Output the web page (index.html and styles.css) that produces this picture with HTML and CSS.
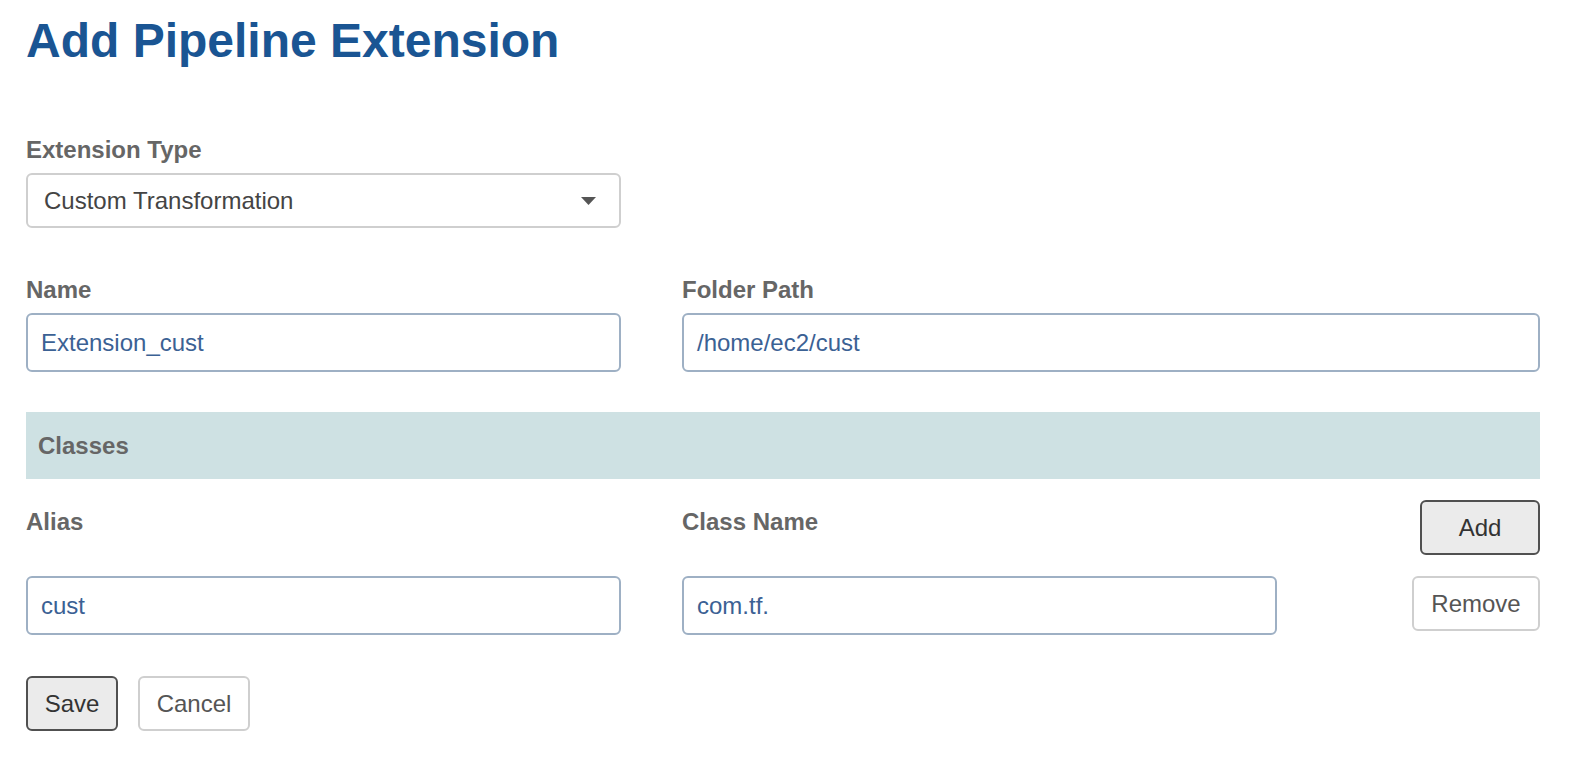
FILE: index.html
```html
<!DOCTYPE html>
<html lang="en">
<head>
<meta charset="utf-8">
<title>Add Pipeline Extension</title>
<link rel="stylesheet" href="styles.css">
</head>
<body>
<main class="page">
  <h1 class="title">Add Pipeline Extension</h1>

  <div class="field field-type">
    <label class="label">Extension Type</label>
    <div class="select">
      <span class="select-value">Custom Transformation</span>
      <svg class="caret" width="15" height="8" viewBox="0 0 15 8"><polygon points="0,0 15,0 7.5,8" fill="#555"/></svg>
    </div>
  </div>

  <div class="row row-name">
    <div class="field col">
      <label class="label">Name</label>
      <div class="input">Extension_cust</div>
    </div>
    <div class="field col-wide">
      <label class="label">Folder Path</label>
      <div class="input">/home/ec2/cust</div>
    </div>
  </div>

  <div class="section-bar">Classes</div>

  <div class="class-grid head">
    <div class="label head-label">Alias</div>
    <div class="label head-label">Class Name</div>
    <div class="cell-end"><button class="btn btn-dark btn-add">Add</button></div>
  </div>

  <div class="class-grid item">
    <div class="input">cust</div>
    <div class="input">com.tf.</div>
    <div class="cell-end"><button class="btn btn-light btn-remove">Remove</button></div>
  </div>

  <div class="actions">
    <button class="btn btn-dark btn-save">Save</button>
    <button class="btn btn-light btn-cancel">Cancel</button>
  </div>
</main>
</body>
</html>
```

FILE: styles.css
```css
* { box-sizing: border-box; }

html, body {
  margin: 0;
  padding: 0;
  background: #ffffff;
}

body {
  font-family: "Liberation Sans", Arial, Helvetica, sans-serif;
  font-size: 24px;
  color: #444;
}

.page {
  width: 1540px;
  padding-left: 26px;
}

.title {
  margin: 13px 0 0 0;
  font-size: 48px;
  line-height: 56px;
  font-weight: bold;
  color: #1a5593;
}

.label {
  display: block;
  font-size: 24px;
  line-height: 28px;
  font-weight: bold;
  color: #666;
  margin-bottom: 9px;
}

.field-type {
  margin-top: 67px;
  width: 595px;
}

.select {
  height: 55px;
  border: 2px solid #cfcfcf;
  border-radius: 6px;
  display: flex;
  align-items: center;
  justify-content: space-between;
  padding: 0 23px 0 16px;
  color: #444;
  background: #fff;
}

.select-value {
  line-height: 28px;
}

.caret {
  display: block;
  margin-top: 1px;
}

.row {
  display: flex;
  gap: 61px;
}

.row-name {
  margin-top: 48px;
}

.col { width: 595px; }
.col-wide { flex: 1; }

.input {
  height: 59px;
  border: 2px solid #9eb0c4;
  border-radius: 6px;
  padding: 0 13px;
  display: flex;
  align-items: center;
  color: #3b6194;
  background: #fff;
  line-height: 28px;
}

.section-bar {
  margin-top: 40px;
  height: 67px;
  background: #cee1e3;
  color: #666;
  font-weight: bold;
  display: flex;
  align-items: center;
  padding-left: 12px;
  padding-top: 1px;
}

.class-grid {
  display: grid;
  grid-template-columns: 595px 595px 1fr;
  column-gap: 61px;
}

.class-grid.head {
  margin-top: 21px;
  align-items: start;
}

.head-label {
  margin: 8px 0 0 0;
}

.class-grid.item {
  margin-top: 21px;
  align-items: start;
}

.cell-end {
  display: flex;
  justify-content: flex-end;
}

.btn {
  font-family: "Liberation Sans", Arial, Helvetica, sans-serif;
  font-size: 24px;
  line-height: 28px;
  border-radius: 6px;
  height: 55px;
  padding: 0 16px;
  cursor: pointer;
}

.btn-dark {
  background: #ebebeb;
  border: 2px solid #505050;
  color: #333;
}

.btn-light {
  background: #fff;
  border: 2px solid #cfcfcf;
  color: #555;
}

.btn-add { width: 120px; }
.btn-remove { width: 128px; }

.actions {
  margin-top: 41px;
  display: flex;
  gap: 20px;
}

.btn-save { width: 92px; }
.btn-cancel { width: 112px; }
```
